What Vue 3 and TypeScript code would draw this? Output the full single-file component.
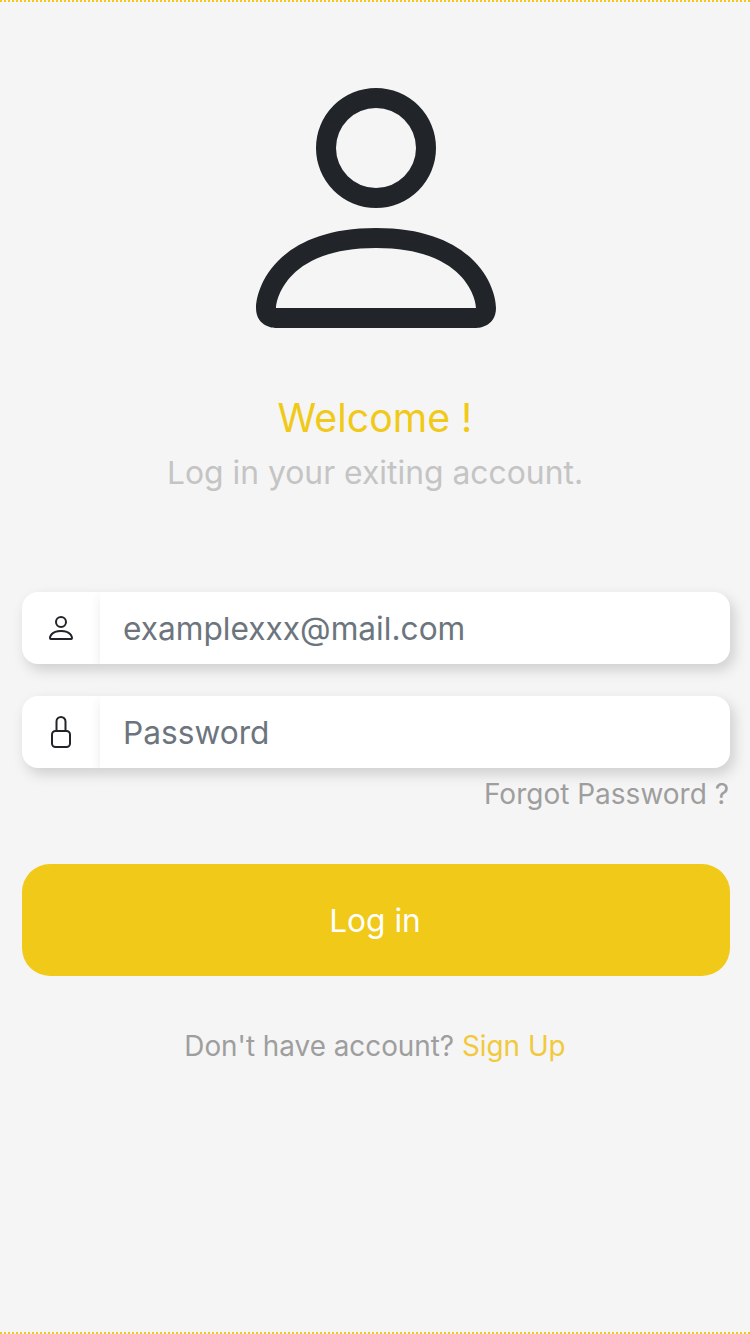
<script setup lang="ts">
const personPath = 'M13 14s1 0 1-1-1-4-6-4-6 3-6 4 1 1 1 1h10zm-9.995-.944v-.002.002zM3.022 13h9.956a.274.274 0 0 0 .014-.002l.008-.002c-.001-.246-.154-.986-.832-1.664C11.516 10.68 10.289 10 8 10c-2.29 0-3.516.68-4.168 1.332-.678.678-.83 1.418-.832 1.664a1.05 1.05 0 0 0 .022.004zm9.974.056v-.002.002zM8 7a2 2 0 1 0 0-4 2 2 0 0 0 0 4zm3-2a3 3 0 1 1-6 0 3 3 0 0 1 6 0z'
</script>

<template>
  <main class="page">
    <svg class="avatar" viewBox="0 0 16 16" fill="#212529" aria-hidden="true"><path fill-rule="evenodd" :d="personPath" /></svg>
    <h1 class="welcome">Welcome !</h1>
    <p class="sub">Log in your exiting account.</p>

    <form class="form" @submit.prevent>
      <label class="group">
        <span class="prepend">
          <svg class="icon" viewBox="0 0 16 16" fill="#212529" aria-hidden="true"><path fill-rule="evenodd" :d="personPath" /></svg>
        </span>
        <input class="field" type="email" placeholder="examplexxx@mail.com" />
      </label>
      <label class="group second">
        <span class="prepend">
          <svg class="icon" viewBox="0 0 32 32" fill="none" stroke="#212529" stroke-width="2" aria-hidden="true">
            <rect x="7" y="15" width="18" height="16" rx="3.5" />
            <path d="M11.5 15V5.5a4.5 4.5 0 0 1 9 0V15" />
          </svg>
        </span>
        <input class="field" type="password" placeholder="Password" />
      </label>
      <a class="forgot">Forgot Password ?</a>
      <button class="login" type="submit">Log in</button>
    </form>

    <p class="signup">Don't have account? <a class="link">Sign Up</a></p>
  </main>
</template>

<style>
html, body { margin: 0; padding: 0; }
</style>

<style scoped>
.page {
  box-sizing: border-box;
  width: 750px;
  height: 1334px;
  display: flex;
  flex-direction: column;
  align-items: center;
  background: #f5f5f5;
  border-top: 2px dotted #f1c918;
  border-bottom: 2px dotted #f1c918;
  font-family: Inter, "Liberation Sans", sans-serif;
  overflow: hidden;
}
.avatar {
  width: 320px;
  height: 320px;
  margin: 46px 0 0 1px;
  flex: none;
}
.welcome {
  margin: 25px 0 0;
  font-size: 39.3px;
  line-height: 50px;
  font-weight: 400;
  color: #f1c918;
}
.sub {
  margin: 10px 0 0;
  font-size: 31.85px;
  line-height: 40px;
  color: #c4c4c4;
}
.form {
  width: 708px;
  margin: 99px 0 0 2px;
  display: flex;
  flex-direction: column;
}
.group {
  display: flex;
  height: 72px;
}
.second { margin-top: 32px; }
.prepend {
  width: 78px;
  flex: none;
  display: flex;
  align-items: center;
  justify-content: center;
  background: #fff;
  border-radius: 16px 0 0 16px;
  box-shadow: 4px 6px 14px rgba(0, 0, 0, 0.16);
}
.icon { width: 32px; height: 32px; }
.field {
  flex: 1;
  min-width: 0;
  box-sizing: border-box;
  border: 0;
  outline: 0;
  padding: 2px 24px 0 23px;
  background: #fff;
  border-radius: 0 16px 16px 0;
  box-shadow: 4px 6px 14px rgba(0, 0, 0, 0.16);
  font: 400 31.65px/40px Inter, "Liberation Sans", sans-serif;
  color: #6c757d;
}
.field::placeholder { color: #6c757d; opacity: 1; }
.forgot {
  align-self: flex-end;
  margin: 6px 1px 0 0;
  font-size: 28px;
  line-height: 40px;
  color: #9e9e9e;
}
.login {
  margin-top: 50px;
  height: 112px;
  padding: 2px 2px 0 0;
  border: 0;
  border-radius: 28px;
  background: #f1c918;
  color: #fff;
  font: 400 31.7px/40px Inter, "Liberation Sans", sans-serif;
}
.signup {
  margin: 50px 0 0;
  font-size: 27.85px;
  line-height: 40px;
  color: #9e9e9e;
}
.link { color: #f1c93b; }
</style>
